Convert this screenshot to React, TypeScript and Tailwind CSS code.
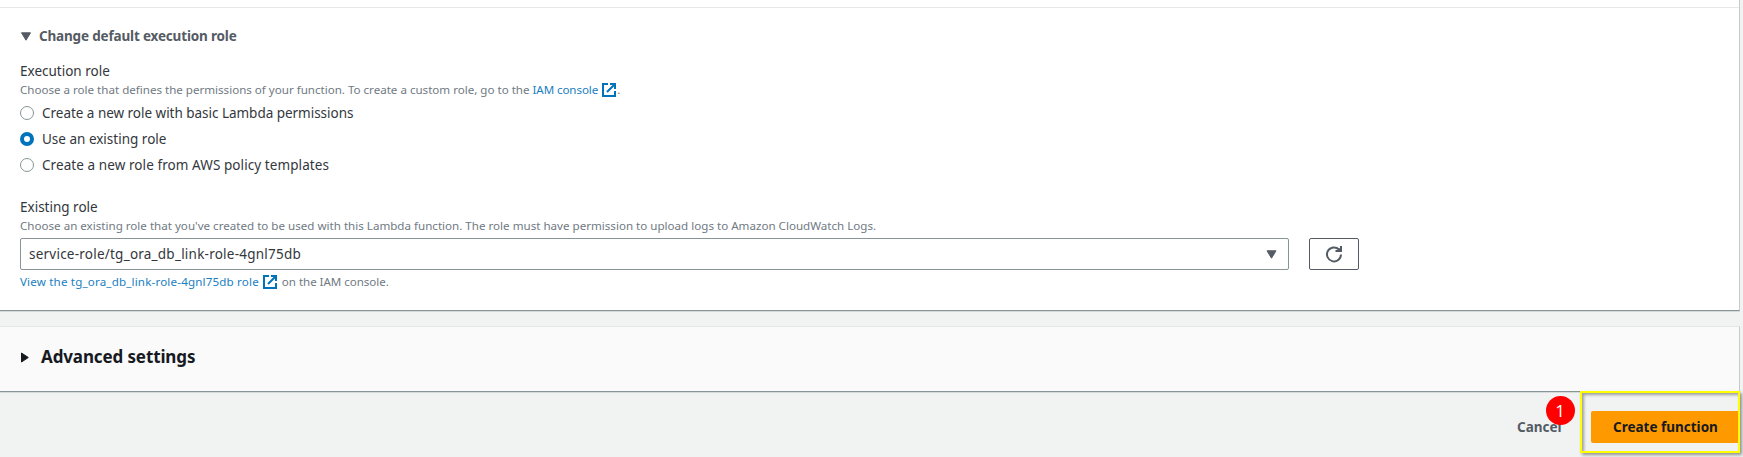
import type { ReactNode } from "react";

function ExternalIcon() {
  return (
    <svg viewBox="0 0 14 14" className="h-[14px] w-[14px] shrink-0" fill="none" stroke="#0073bb" strokeWidth="2">
      <path d="M6 1H1v12h12V8" />
      <path d="M8 1h5v5M13 1L5 9" />
    </svg>
  );
}

function Radio({ checked, children, className }: { checked?: boolean; children: ReactNode; className?: string }) {
  return (
    <label className="flex h-[26px] items-center gap-[8px]">
      <span
        className={
          checked
            ? "h-[14px] w-[14px] shrink-0 rounded-full border-[4px] border-[#0073bb] bg-white"
            : "h-[14px] w-[14px] shrink-0 rounded-full border border-[#879596] bg-white"
        }
      />
      <span className={className}>{children}</span>
    </label>
  );
}

export default function App() {
  return (
    <div className="flex h-[457px] w-[1743px] flex-col overflow-hidden whitespace-nowrap bg-[#f1f3f3] font-['Noto_Sans',sans-serif] text-[13.5px] text-[#33373d]">
      <section className="h-[311px] w-[1740px] shrink-0 border-r border-b border-r-[#c4cbcf] border-b-[#879596] bg-white shadow-[0_1px_0_#d5dbdb]">
        <div className="h-[8px] border-b border-[#e7e9e9]" />
        <div className="flex flex-col pl-[20px]">
          <div className="mt-[18px] flex h-[20px] items-center gap-[7px] text-[#545b64]">
            <svg viewBox="0 0 12 9" className="h-[9px] w-[12px]" fill="#545b64">
              <path d="M1.500 0.800h9L6 8.200z" stroke="#545b64" strokeLinejoin="round" />
            </svg>
            <h3 className="font-bold tracking-[-0.17px]">Change default execution role</h3>
          </div>

          <div className="mt-[15px] h-[20px] leading-[20px]">Execution role</div>
          <div className="flex h-[18px] items-center text-[11.6px] text-[#707a83]">
            <span className="whitespace-pre tracking-[-0.01px]">Choose a role that defines the permissions of your function. To create a custom role, go to the </span>
            <a className="mr-[4px] tracking-[-0.1px] text-[#1a80c1]">IAM console</a>
            <ExternalIcon />
            <span className="ml-[1px]">.</span>
          </div>

          <div className="mt-[1px]">
            <Radio className="tracking-[-0.025px]">Create a new role with basic Lambda permissions</Radio>
            <Radio checked>Use an existing role</Radio>
            <Radio className="tracking-[0.08px]">Create a new role from AWS policy templates</Radio>
          </div>

          <div className="mt-[19px] h-[20px] leading-[20px]">Existing role</div>
          <div className="h-[18px] text-[11.6px] leading-[18px] text-[#707a83]">
            Choose an existing role that you've created to be used with this Lambda function. The role must have permission to upload logs to Amazon CloudWatch Logs.
          </div>

          <div className="mt-[3px] flex gap-[20px]">
            <div className="flex h-[32px] w-[1269px] items-center justify-between rounded-[2px] border border-[#879596] pr-[11px] pl-[8px]">
              <span className="tracking-[0.23px]">service-role/tg_ora_db_link-role-4gnl75db</span>
              <svg viewBox="0 0 11 9" className="h-[9px] w-[11px]" fill="#545b64">
                <path d="M1 0.800h9L5.500 8.200z" stroke="#545b64" strokeLinejoin="round" />
              </svg>
            </div>
            <button className="flex h-[32px] w-[50px] items-center justify-center rounded-[2px] border border-[#545b64]">
              <svg viewBox="0 0 18 18" className="h-[18px] w-[18px]" fill="none" stroke="#545b64" strokeWidth="2">
                <path d="M16 9.500A7 7 0 1 1 14 4.500" />
                <path d="M16 1v5h-5.500" />
                <path d="M12.500 5L16 2v3.500z" fill="#545b64" stroke="none" />
              </svg>
            </button>
          </div>

          <div className="mt-[3px] flex h-[18px] items-center text-[11.6px] text-[#707a83]">
            <a className="mr-[4px] tracking-[0.167px] text-[#1a80c1]">View the tg_ora_db_link-role-4gnl75db role</a>
            <ExternalIcon />
            <span className="ml-[5px] tracking-[-0.05px]">on the IAM console.</span>
          </div>
        </div>
      </section>

      <section className="mt-[15px] flex h-[66px] w-[1740px] shrink-0 items-center border-t border-r border-b border-t-[#e4e7e7] border-r-[#c4cbcf] border-b-[#879596] bg-[#fafafa] pb-[4px] pl-[20px] text-[#16191f] shadow-[0_1px_0_#d5dbdb]">
        <svg viewBox="0 0 9 11" className="h-[11px] w-[9px]" fill="#16191f">
          <path d="M1.500 1v9L8.300 5.500z" stroke="#16191f" strokeLinejoin="round" />
        </svg>
        <h2 className="ml-[12px] text-[17px] font-bold tracking-[-0.12px]">Advanced settings</h2>
      </section>

      <footer className="relative flex h-[65px] w-[1743px] shrink-0 items-start pt-[19px] pl-[1517px] font-bold">
        <button className="h-[32px] w-[74px] text-left text-[#545b64]">Cancel</button>
        <button className="h-[32px] w-[147px] rounded-l-[2px] bg-[#ff9900] pl-[22px] text-left text-[#16191f]">Create function</button>
        <div className="absolute top-[-1px] left-[1580px] h-[62px] w-[160px] border-2 border-[#ffff00] shadow-[2px_2px_3px_rgba(0,0,0,0.4),inset_2px_2px_3px_rgba(0,0,0,0.35)]" />
        <div className="absolute top-[4px] left-[1546px] flex h-[29px] w-[29px] items-center justify-center rounded-full bg-[#ff0000] pr-[1px] font-['Open_Sans',sans-serif] text-[17px] font-normal text-white">
          1
        </div>
      </footer>
    </div>
  );
}
